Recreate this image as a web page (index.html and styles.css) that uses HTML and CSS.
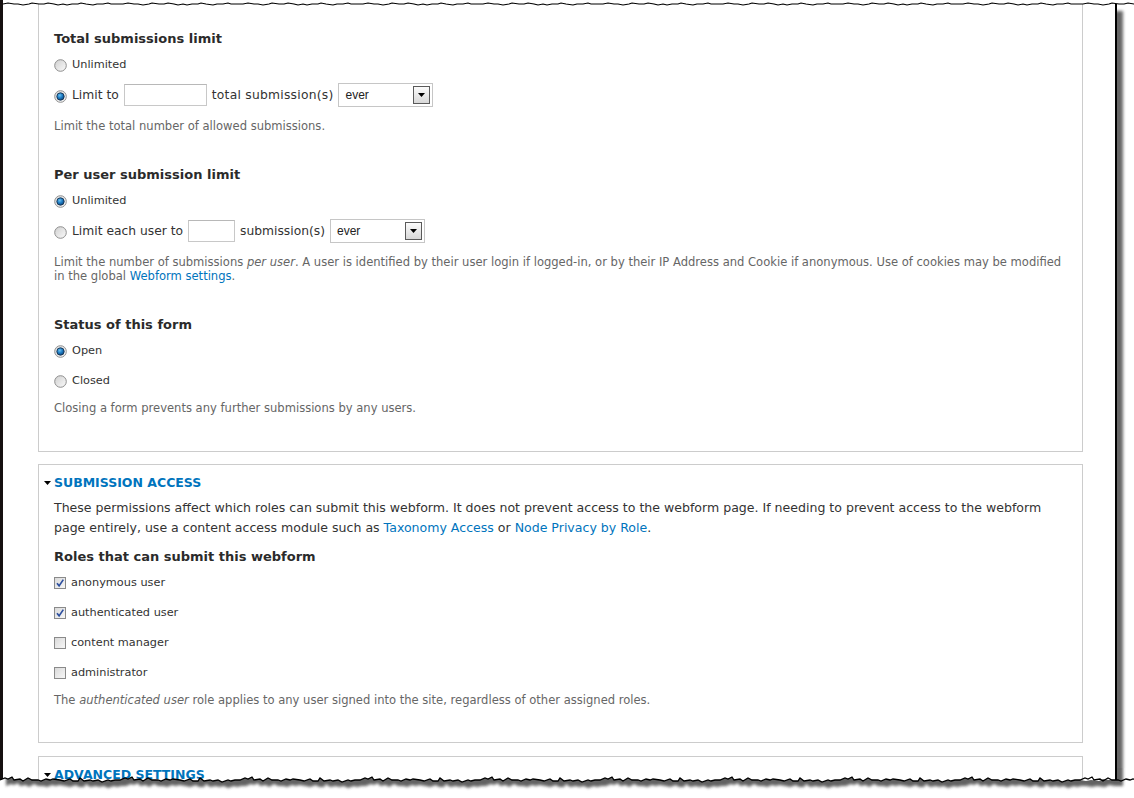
FILE: index.html
```html
<!DOCTYPE html>
<html lang="en">
<head>
<meta charset="utf-8">
<title>Webform settings</title>
<link rel="stylesheet" href="styles.css">
</head>
<body>
<svg class="defs" aria-hidden="true">
  <defs>
    <linearGradient id="gOff" x1="0" y1="0" x2="1" y2="1">
      <stop offset="0" stop-color="#cfcfcf"/>
      <stop offset="1" stop-color="#fbfbfb"/>
    </linearGradient>
    <linearGradient id="gRing" x1="0" y1="0" x2="1" y2="1">
      <stop offset="0" stop-color="#dcdcdc"/>
      <stop offset="1" stop-color="#fdfdfd"/>
    </linearGradient>
    <radialGradient id="gDot" cx="0.4" cy="0.35" r="0.7">
      <stop offset="0" stop-color="#6cc3f2"/>
      <stop offset="0.5" stop-color="#1d7cc4"/>
      <stop offset="1" stop-color="#0b3f73"/>
    </radialGradient>
    <linearGradient id="gBox" x1="0" y1="0" x2="1" y2="1">
      <stop offset="0" stop-color="#d8d8d8"/>
      <stop offset="1" stop-color="#f8f8f8"/>
    </linearGradient>
    <filter id="blur" x="-5%" y="-50%" width="110%" height="200%"><feGaussianBlur stdDeviation="1.6"/></filter>
  </defs>
</svg>

<div class="frame">
  <div class="paper">

    <div class="fs fs-cut">
      <div class="h">Total submissions limit</div>
      <div class="opts">
        <div class="row">
          <svg class="radio" viewBox="0 0 13 13"><circle cx="6.5" cy="6.5" r="5.8" fill="url(#gOff)" stroke="#8e8e8e"/></svg>
          <span class="lbl">Unlimited</span>
        </div>
        <div class="row inputrow">
          <svg class="radio" viewBox="0 0 13 13"><circle cx="6.5" cy="6.5" r="5.8" fill="url(#gRing)" stroke="#8e8e8e"/><circle cx="6.5" cy="6.5" r="3.7" fill="url(#gDot)" stroke="#17324f" stroke-width="0.9"/></svg>
          <span class="lbl big">Limit to</span>
          <span class="txt w83"></span>
          <span class="lbl big wide">total submission(s)</span>
          <span class="select"><span class="sel-text">ever</span><span class="sel-btn"><svg width="7" height="4" viewBox="0 0 7 4"><path d="M0 0H7L3.5 4Z" fill="#000"/></svg></span></span>
        </div>
      </div>
      <div class="desc">Limit the total number of allowed submissions.</div>

      <div class="h gap">Per user submission limit</div>
      <div class="opts">
        <div class="row">
          <svg class="radio" viewBox="0 0 13 13"><circle cx="6.5" cy="6.5" r="5.8" fill="url(#gRing)" stroke="#8e8e8e"/><circle cx="6.5" cy="6.5" r="3.7" fill="url(#gDot)" stroke="#17324f" stroke-width="0.9"/></svg>
          <span class="lbl">Unlimited</span>
        </div>
        <div class="row inputrow">
          <svg class="radio" viewBox="0 0 13 13"><circle cx="6.5" cy="6.5" r="5.8" fill="url(#gOff)" stroke="#8e8e8e"/></svg>
          <span class="lbl big">Limit each user to</span>
          <span class="txt w47"></span>
          <span class="lbl big">submission(s)</span>
          <span class="select"><span class="sel-text">ever</span><span class="sel-btn"><svg width="7" height="4" viewBox="0 0 7 4"><path d="M0 0H7L3.5 4Z" fill="#000"/></svg></span></span>
        </div>
      </div>
      <div class="desc">Limit the number of submissions <em>per user</em>. A user is identified by their user login if logged-in, or by their IP Address and Cookie if anonymous. Use of cookies may be modified<br>in the global <a href="#">Webform settings</a>.</div>

      <div class="h gap">Status of this form</div>
      <div class="opts">
        <div class="row">
          <svg class="radio" viewBox="0 0 13 13"><circle cx="6.5" cy="6.5" r="5.8" fill="url(#gRing)" stroke="#8e8e8e"/><circle cx="6.5" cy="6.5" r="3.7" fill="url(#gDot)" stroke="#17324f" stroke-width="0.9"/></svg>
          <span class="lbl">Open</span>
        </div>
        <div class="row">
          <svg class="radio" viewBox="0 0 13 13"><circle cx="6.5" cy="6.5" r="5.8" fill="url(#gOff)" stroke="#8e8e8e"/></svg>
          <span class="lbl">Closed</span>
        </div>
      </div>
      <div class="desc">Closing a form prevents any further submissions by any users.</div>
    </div>

    <div class="fs">
      <div class="legend"><svg class="tri" width="7" height="4" viewBox="0 0 7 4"><path d="M0 0H7L3.5 4Z" fill="#000"/></svg><a href="#">Submission access</a></div>
      <p class="para">These permissions affect which roles can submit this webform. It does not prevent access to the webform page. If needing to prevent access to the webform<br>page entirely, use a content access module such as <a href="#">Taxonomy Access</a> or <a href="#">Node Privacy by Role</a>.</p>
      <div class="h small-gap">Roles that can submit this webform</div>
      <div class="opts">
        <div class="row">
          <svg class="check" viewBox="0 0 12 12"><rect x="0.5" y="0.5" width="11" height="11" fill="url(#gBox)" stroke="#8a8a8a"/><path d="M3 6.3L5.1 8.9L9.3 2.6" fill="none" stroke="#2d4f9f" stroke-width="1.7"/></svg>
          <span class="lbl">anonymous user</span>
        </div>
        <div class="row">
          <svg class="check" viewBox="0 0 12 12"><rect x="0.5" y="0.5" width="11" height="11" fill="url(#gBox)" stroke="#8a8a8a"/><path d="M3 6.3L5.1 8.9L9.3 2.6" fill="none" stroke="#2d4f9f" stroke-width="1.7"/></svg>
          <span class="lbl">authenticated user</span>
        </div>
        <div class="row">
          <svg class="check" viewBox="0 0 12 12"><rect x="0.5" y="0.5" width="11" height="11" fill="url(#gBox)" stroke="#8a8a8a"/></svg>
          <span class="lbl">content manager</span>
        </div>
        <div class="row">
          <svg class="check" viewBox="0 0 12 12"><rect x="0.5" y="0.5" width="11" height="11" fill="url(#gBox)" stroke="#8a8a8a"/></svg>
          <span class="lbl">administrator</span>
        </div>
      </div>
      <div class="desc">The <em>authenticated user</em> role applies to any user signed into the site, regardless of other assigned roles.</div>
    </div>

    <div class="fs">
      <div class="legend"><svg class="tri" width="7" height="4" viewBox="0 0 7 4"><path d="M0 0H7L3.5 4Z" fill="#000"/></svg><a href="#">Advanced settings</a></div>
    </div>

  </div>

  <svg class="edge-top" width="1134" height="12" viewBox="0 0 1134 12" aria-hidden="true">
    <path fill="#fff" d="M3 0L3 4l5 -1 l6 1 l4 0 l5 1 l6 -1 l3 -1 l7 1 l5 0 l4 -1 l6 1 l4 1 l5 -1 l4 1 l5 -1 l6 0 l3 -1 l5 1 l7 1 l4 -1 l6 0 l5 -1 l3 1 l7 0 l5 0 l5 -1 l6 1 l4 0 l5 1 l6 -1 l3 -1 l7 1 l5 0 l4 -1 l6 1 l4 1 l5 -1 l4 1 l5 -1 l6 0 l3 -1 l5 1 l7 1 l4 -1 l6 0 l5 -1 l3 1 l7 0 l5 0 l5 -1 l6 1 l4 0 l5 1 l6 -1 l3 -1 l7 1 l5 0 l4 -1 l6 1 l4 1 l5 -1 l4 1 l5 -1 l6 0 l3 -1 l5 1 l7 1 l4 -1 l6 0 l5 -1 l3 1 l7 0 l5 0 l5 -1 l6 1 l4 0 l5 1 l6 -1 l3 -1 l7 1 l5 0 l4 -1 l6 1 l4 1 l5 -1 l4 1 l5 -1 l6 0 l3 -1 l5 1 l7 1 l4 -1 l6 0 l5 -1 l3 1 l7 0 l5 0 l5 -1 l6 1 l4 0 l5 1 l6 -1 l3 -1 l7 1 l5 0 l4 -1 l6 1 l4 1 l5 -1 l4 1 l5 -1 l6 0 l3 -1 l5 1 l7 1 l4 -1 l6 0 l5 -1 l3 1 l7 0 l5 0 l5 -1 l6 1 l4 0 l5 1 l6 -1 l3 -1 l7 1 l5 0 l4 -1 l6 1 l4 1 l5 -1 l4 1 l5 -1 l6 0 l3 -1 l5 1 l7 1 l4 -1 l6 0 l5 -1 l3 1 l7 0 l5 0 l5 -1 l6 1 l4 0 l5 1 l6 -1 l3 -1 l7 1 l5 0 l4 -1 l6 1 l4 1 l5 -1 l4 1 l5 -1 l6 0 l3 -1 l5 1 l7 1 l4 -1 l6 0 l5 -1 l3 1 l7 0 l5 0 l5 -1 l6 1 l4 0 l5 1 l6 -1 l3 -1 l7 1 l5 0 l4 -1 l6 1 l4 1 l5 -1 l4 1 l5 -1 l6 0 l3 -1 l5 1 l7 1 l4 -1 l6 0 l5 -1 l3 1 l7 0 l5 0 l5 -1 l6 1 l4 0 l5 1 l6 -1 l3 -1 l7 1 l5 0 l4 -1 l6 1 l4 1 l5 -1 l4 1 l5 -1 l6 0 l3 -1 l5 1 l7 1 l4 -1 l6 0 l5 -1 l3 1 l7 0 l5 0 l6 1 l5 -1 l7 0 l4 -1 l6 1 l6 0 L1117 0Z"/>
    <path fill="none" stroke="#000" stroke-width="1.2" d="M3 4l5 -1 l6 1 l4 0 l5 1 l6 -1 l3 -1 l7 1 l5 0 l4 -1 l6 1 l4 1 l5 -1 l4 1 l5 -1 l6 0 l3 -1 l5 1 l7 1 l4 -1 l6 0 l5 -1 l3 1 l7 0 l5 0 l5 -1 l6 1 l4 0 l5 1 l6 -1 l3 -1 l7 1 l5 0 l4 -1 l6 1 l4 1 l5 -1 l4 1 l5 -1 l6 0 l3 -1 l5 1 l7 1 l4 -1 l6 0 l5 -1 l3 1 l7 0 l5 0 l5 -1 l6 1 l4 0 l5 1 l6 -1 l3 -1 l7 1 l5 0 l4 -1 l6 1 l4 1 l5 -1 l4 1 l5 -1 l6 0 l3 -1 l5 1 l7 1 l4 -1 l6 0 l5 -1 l3 1 l7 0 l5 0 l5 -1 l6 1 l4 0 l5 1 l6 -1 l3 -1 l7 1 l5 0 l4 -1 l6 1 l4 1 l5 -1 l4 1 l5 -1 l6 0 l3 -1 l5 1 l7 1 l4 -1 l6 0 l5 -1 l3 1 l7 0 l5 0 l5 -1 l6 1 l4 0 l5 1 l6 -1 l3 -1 l7 1 l5 0 l4 -1 l6 1 l4 1 l5 -1 l4 1 l5 -1 l6 0 l3 -1 l5 1 l7 1 l4 -1 l6 0 l5 -1 l3 1 l7 0 l5 0 l5 -1 l6 1 l4 0 l5 1 l6 -1 l3 -1 l7 1 l5 0 l4 -1 l6 1 l4 1 l5 -1 l4 1 l5 -1 l6 0 l3 -1 l5 1 l7 1 l4 -1 l6 0 l5 -1 l3 1 l7 0 l5 0 l5 -1 l6 1 l4 0 l5 1 l6 -1 l3 -1 l7 1 l5 0 l4 -1 l6 1 l4 1 l5 -1 l4 1 l5 -1 l6 0 l3 -1 l5 1 l7 1 l4 -1 l6 0 l5 -1 l3 1 l7 0 l5 0 l5 -1 l6 1 l4 0 l5 1 l6 -1 l3 -1 l7 1 l5 0 l4 -1 l6 1 l4 1 l5 -1 l4 1 l5 -1 l6 0 l3 -1 l5 1 l7 1 l4 -1 l6 0 l5 -1 l3 1 l7 0 l5 0 l5 -1 l6 1 l4 0 l5 1 l6 -1 l3 -1 l7 1 l5 0 l4 -1 l6 1 l4 1 l5 -1 l4 1 l5 -1 l6 0 l3 -1 l5 1 l7 1 l4 -1 l6 0 l5 -1 l3 1 l7 0 l5 0 l5 -1 l6 1 l4 0 l5 1 l6 -1 l3 -1 l7 1 l5 0 l4 -1 l6 1 l4 1 l5 -1 l4 1 l5 -1 l6 0 l3 -1 l5 1 l7 1 l4 -1 l6 0 l5 -1 l3 1 l7 0 l5 0 l6 1 l5 -1 l7 0 l4 -1 l6 1 l6 0"/>
  </svg>

  <svg class="edge-bottom" width="1134" height="30" viewBox="0 0 1134 30" aria-hidden="true">
    <defs>
      <clipPath id="outside">
        <path d="M0 30L0 12l5 -2 l3 1 l4 -2 l2 3 l6 -1 l3 2 l5 -3 l4 2 l6 0 l3 1 l5 -2 l4 1 l3 -1 l7 1 l4 1 l6 -2 l3 2 l5 0 l2 -3 l4 3 l6 -1 l3 1 l5 -1 l4 2 l6 -2 l3 1 l4 -1 l5 0 l5 -2 l3 1 l4 -2 l2 3 l6 -1 l3 2 l5 -3 l4 2 l6 0 l3 1 l5 -2 l4 1 l3 -1 l7 1 l4 1 l6 -2 l3 2 l5 0 l2 -3 l4 3 l6 -1 l3 1 l5 -1 l4 2 l6 -2 l3 1 l4 -1 l5 0 l5 -2 l3 1 l4 -2 l2 3 l6 -1 l3 2 l5 -3 l4 2 l6 0 l3 1 l5 -2 l4 1 l3 -1 l7 1 l4 1 l6 -2 l3 2 l5 0 l2 -3 l4 3 l6 -1 l3 1 l5 -1 l4 2 l6 -2 l3 1 l4 -1 l5 0 l5 -2 l3 1 l4 -2 l2 3 l6 -1 l3 2 l5 -3 l4 2 l6 0 l3 1 l5 -2 l4 1 l3 -1 l7 1 l4 1 l6 -2 l3 2 l5 0 l2 -3 l4 3 l6 -1 l3 1 l5 -1 l4 2 l6 -2 l3 1 l4 -1 l5 0 l5 -2 l3 1 l4 -2 l2 3 l6 -1 l3 2 l5 -3 l4 2 l6 0 l3 1 l5 -2 l4 1 l3 -1 l7 1 l4 1 l6 -2 l3 2 l5 0 l2 -3 l4 3 l6 -1 l3 1 l5 -1 l4 2 l6 -2 l3 1 l4 -1 l5 0 l5 -2 l3 1 l4 -2 l2 3 l6 -1 l3 2 l5 -3 l4 2 l6 0 l3 1 l5 -2 l4 1 l3 -1 l7 1 l4 1 l6 -2 l3 2 l5 0 l2 -3 l4 3 l6 -1 l3 1 l5 -1 l4 2 l6 -2 l3 1 l4 -1 l5 0 l5 -2 l3 1 l4 -2 l2 3 l6 -1 l3 2 l5 -3 l4 2 l6 0 l3 1 l5 -2 l4 1 l3 -1 l7 1 l4 1 l6 -2 l3 2 l5 0 l2 -3 l4 3 l6 -1 l3 1 l5 -1 l4 2 l6 -2 l3 1 l4 -1 l5 0 l5 -2 l3 1 l4 -2 l2 3 l6 -1 l3 2 l5 -3 l4 2 l6 0 l3 1 l5 -2 l4 1 l3 -1 l7 1 l4 1 l6 -2 l3 2 l5 0 l2 -3 l4 3 l6 -1 l3 1 l5 -1 l4 2 l6 -2 l3 1 l4 -1 l5 0 l5 -2 l3 1 l4 -2 l2 3 l6 -1 l3 2 l5 -3 l4 2 l6 0 l3 1 l5 -2 l4 1 l3 -1 l7 1 l4 1 l6 -2 l3 2 l5 0 l2 -3 l4 3 l6 -1 l3 1 l5 -1 l4 2 l6 -2 l3 1 l4 -1 l5 0 l6 1 l5 -1 l8 1 l4 -2 l6 1 l8 0 L1117 0L1134 0L1134 30Z"/>
      </clipPath>
    </defs>
    <path fill="#fff" d="M0 30L0 12l5 -2 l3 1 l4 -2 l2 3 l6 -1 l3 2 l5 -3 l4 2 l6 0 l3 1 l5 -2 l4 1 l3 -1 l7 1 l4 1 l6 -2 l3 2 l5 0 l2 -3 l4 3 l6 -1 l3 1 l5 -1 l4 2 l6 -2 l3 1 l4 -1 l5 0 l5 -2 l3 1 l4 -2 l2 3 l6 -1 l3 2 l5 -3 l4 2 l6 0 l3 1 l5 -2 l4 1 l3 -1 l7 1 l4 1 l6 -2 l3 2 l5 0 l2 -3 l4 3 l6 -1 l3 1 l5 -1 l4 2 l6 -2 l3 1 l4 -1 l5 0 l5 -2 l3 1 l4 -2 l2 3 l6 -1 l3 2 l5 -3 l4 2 l6 0 l3 1 l5 -2 l4 1 l3 -1 l7 1 l4 1 l6 -2 l3 2 l5 0 l2 -3 l4 3 l6 -1 l3 1 l5 -1 l4 2 l6 -2 l3 1 l4 -1 l5 0 l5 -2 l3 1 l4 -2 l2 3 l6 -1 l3 2 l5 -3 l4 2 l6 0 l3 1 l5 -2 l4 1 l3 -1 l7 1 l4 1 l6 -2 l3 2 l5 0 l2 -3 l4 3 l6 -1 l3 1 l5 -1 l4 2 l6 -2 l3 1 l4 -1 l5 0 l5 -2 l3 1 l4 -2 l2 3 l6 -1 l3 2 l5 -3 l4 2 l6 0 l3 1 l5 -2 l4 1 l3 -1 l7 1 l4 1 l6 -2 l3 2 l5 0 l2 -3 l4 3 l6 -1 l3 1 l5 -1 l4 2 l6 -2 l3 1 l4 -1 l5 0 l5 -2 l3 1 l4 -2 l2 3 l6 -1 l3 2 l5 -3 l4 2 l6 0 l3 1 l5 -2 l4 1 l3 -1 l7 1 l4 1 l6 -2 l3 2 l5 0 l2 -3 l4 3 l6 -1 l3 1 l5 -1 l4 2 l6 -2 l3 1 l4 -1 l5 0 l5 -2 l3 1 l4 -2 l2 3 l6 -1 l3 2 l5 -3 l4 2 l6 0 l3 1 l5 -2 l4 1 l3 -1 l7 1 l4 1 l6 -2 l3 2 l5 0 l2 -3 l4 3 l6 -1 l3 1 l5 -1 l4 2 l6 -2 l3 1 l4 -1 l5 0 l5 -2 l3 1 l4 -2 l2 3 l6 -1 l3 2 l5 -3 l4 2 l6 0 l3 1 l5 -2 l4 1 l3 -1 l7 1 l4 1 l6 -2 l3 2 l5 0 l2 -3 l4 3 l6 -1 l3 1 l5 -1 l4 2 l6 -2 l3 1 l4 -1 l5 0 l5 -2 l3 1 l4 -2 l2 3 l6 -1 l3 2 l5 -3 l4 2 l6 0 l3 1 l5 -2 l4 1 l3 -1 l7 1 l4 1 l6 -2 l3 2 l5 0 l2 -3 l4 3 l6 -1 l3 1 l5 -1 l4 2 l6 -2 l3 1 l4 -1 l5 0 l6 1 l5 -1 l8 1 l4 -2 l6 1 l8 0 L1117 0L1134 0L1134 30Z"/>
    <g clip-path="url(#outside)">
      <path transform="translate(6 6)" fill="#3a3a3a" opacity="0.8" filter="url(#blur)" d="M0 -30L0 12l5 -2 l3 1 l4 -2 l2 3 l6 -1 l3 2 l5 -3 l4 2 l6 0 l3 1 l5 -2 l4 1 l3 -1 l7 1 l4 1 l6 -2 l3 2 l5 0 l2 -3 l4 3 l6 -1 l3 1 l5 -1 l4 2 l6 -2 l3 1 l4 -1 l5 0 l5 -2 l3 1 l4 -2 l2 3 l6 -1 l3 2 l5 -3 l4 2 l6 0 l3 1 l5 -2 l4 1 l3 -1 l7 1 l4 1 l6 -2 l3 2 l5 0 l2 -3 l4 3 l6 -1 l3 1 l5 -1 l4 2 l6 -2 l3 1 l4 -1 l5 0 l5 -2 l3 1 l4 -2 l2 3 l6 -1 l3 2 l5 -3 l4 2 l6 0 l3 1 l5 -2 l4 1 l3 -1 l7 1 l4 1 l6 -2 l3 2 l5 0 l2 -3 l4 3 l6 -1 l3 1 l5 -1 l4 2 l6 -2 l3 1 l4 -1 l5 0 l5 -2 l3 1 l4 -2 l2 3 l6 -1 l3 2 l5 -3 l4 2 l6 0 l3 1 l5 -2 l4 1 l3 -1 l7 1 l4 1 l6 -2 l3 2 l5 0 l2 -3 l4 3 l6 -1 l3 1 l5 -1 l4 2 l6 -2 l3 1 l4 -1 l5 0 l5 -2 l3 1 l4 -2 l2 3 l6 -1 l3 2 l5 -3 l4 2 l6 0 l3 1 l5 -2 l4 1 l3 -1 l7 1 l4 1 l6 -2 l3 2 l5 0 l2 -3 l4 3 l6 -1 l3 1 l5 -1 l4 2 l6 -2 l3 1 l4 -1 l5 0 l5 -2 l3 1 l4 -2 l2 3 l6 -1 l3 2 l5 -3 l4 2 l6 0 l3 1 l5 -2 l4 1 l3 -1 l7 1 l4 1 l6 -2 l3 2 l5 0 l2 -3 l4 3 l6 -1 l3 1 l5 -1 l4 2 l6 -2 l3 1 l4 -1 l5 0 l5 -2 l3 1 l4 -2 l2 3 l6 -1 l3 2 l5 -3 l4 2 l6 0 l3 1 l5 -2 l4 1 l3 -1 l7 1 l4 1 l6 -2 l3 2 l5 0 l2 -3 l4 3 l6 -1 l3 1 l5 -1 l4 2 l6 -2 l3 1 l4 -1 l5 0 l5 -2 l3 1 l4 -2 l2 3 l6 -1 l3 2 l5 -3 l4 2 l6 0 l3 1 l5 -2 l4 1 l3 -1 l7 1 l4 1 l6 -2 l3 2 l5 0 l2 -3 l4 3 l6 -1 l3 1 l5 -1 l4 2 l6 -2 l3 1 l4 -1 l5 0 l5 -2 l3 1 l4 -2 l2 3 l6 -1 l3 2 l5 -3 l4 2 l6 0 l3 1 l5 -2 l4 1 l3 -1 l7 1 l4 1 l6 -2 l3 2 l5 0 l2 -3 l4 3 l6 -1 l3 1 l5 -1 l4 2 l6 -2 l3 1 l4 -1 l5 0 l6 1 l5 -1 l8 1 l4 -2 l6 1 l8 0 L1117 -30Z"/>
    </g>
    <path fill="none" stroke="#000" stroke-width="1.3" d="M0 12l5 -2 l3 1 l4 -2 l2 3 l6 -1 l3 2 l5 -3 l4 2 l6 0 l3 1 l5 -2 l4 1 l3 -1 l7 1 l4 1 l6 -2 l3 2 l5 0 l2 -3 l4 3 l6 -1 l3 1 l5 -1 l4 2 l6 -2 l3 1 l4 -1 l5 0 l5 -2 l3 1 l4 -2 l2 3 l6 -1 l3 2 l5 -3 l4 2 l6 0 l3 1 l5 -2 l4 1 l3 -1 l7 1 l4 1 l6 -2 l3 2 l5 0 l2 -3 l4 3 l6 -1 l3 1 l5 -1 l4 2 l6 -2 l3 1 l4 -1 l5 0 l5 -2 l3 1 l4 -2 l2 3 l6 -1 l3 2 l5 -3 l4 2 l6 0 l3 1 l5 -2 l4 1 l3 -1 l7 1 l4 1 l6 -2 l3 2 l5 0 l2 -3 l4 3 l6 -1 l3 1 l5 -1 l4 2 l6 -2 l3 1 l4 -1 l5 0 l5 -2 l3 1 l4 -2 l2 3 l6 -1 l3 2 l5 -3 l4 2 l6 0 l3 1 l5 -2 l4 1 l3 -1 l7 1 l4 1 l6 -2 l3 2 l5 0 l2 -3 l4 3 l6 -1 l3 1 l5 -1 l4 2 l6 -2 l3 1 l4 -1 l5 0 l5 -2 l3 1 l4 -2 l2 3 l6 -1 l3 2 l5 -3 l4 2 l6 0 l3 1 l5 -2 l4 1 l3 -1 l7 1 l4 1 l6 -2 l3 2 l5 0 l2 -3 l4 3 l6 -1 l3 1 l5 -1 l4 2 l6 -2 l3 1 l4 -1 l5 0 l5 -2 l3 1 l4 -2 l2 3 l6 -1 l3 2 l5 -3 l4 2 l6 0 l3 1 l5 -2 l4 1 l3 -1 l7 1 l4 1 l6 -2 l3 2 l5 0 l2 -3 l4 3 l6 -1 l3 1 l5 -1 l4 2 l6 -2 l3 1 l4 -1 l5 0 l5 -2 l3 1 l4 -2 l2 3 l6 -1 l3 2 l5 -3 l4 2 l6 0 l3 1 l5 -2 l4 1 l3 -1 l7 1 l4 1 l6 -2 l3 2 l5 0 l2 -3 l4 3 l6 -1 l3 1 l5 -1 l4 2 l6 -2 l3 1 l4 -1 l5 0 l5 -2 l3 1 l4 -2 l2 3 l6 -1 l3 2 l5 -3 l4 2 l6 0 l3 1 l5 -2 l4 1 l3 -1 l7 1 l4 1 l6 -2 l3 2 l5 0 l2 -3 l4 3 l6 -1 l3 1 l5 -1 l4 2 l6 -2 l3 1 l4 -1 l5 0 l5 -2 l3 1 l4 -2 l2 3 l6 -1 l3 2 l5 -3 l4 2 l6 0 l3 1 l5 -2 l4 1 l3 -1 l7 1 l4 1 l6 -2 l3 2 l5 0 l2 -3 l4 3 l6 -1 l3 1 l5 -1 l4 2 l6 -2 l3 1 l4 -1 l5 0 l5 -2 l3 1 l4 -2 l2 3 l6 -1 l3 2 l5 -3 l4 2 l6 0 l3 1 l5 -2 l4 1 l3 -1 l7 1 l4 1 l6 -2 l3 2 l5 0 l2 -3 l4 3 l6 -1 l3 1 l5 -1 l4 2 l6 -2 l3 1 l4 -1 l5 0 l6 1 l5 -1 l8 1 l4 -2 l6 1 l8 0"/>
  </svg>
</div>
</body>
</html>
```

FILE: styles.css
```css
* {
  box-sizing: border-box;
}

body {
  margin: 0;
  background: #fff;
  font-family: "DejaVu Sans", Verdana, sans-serif;
  color: #333;
}

a {
  color: #0074bd;
  text-decoration: none;
}

.defs {
  position: absolute;
  width: 0;
  height: 0;
  overflow: hidden;
}

.frame {
  position: relative;
  width: 1134px;
  height: 798px;
  overflow: hidden;
}

.paper {
  width: 1117px;
  height: 790px;
  border-left: 3px solid #151010;
  border-right: 2px solid #000;
  box-shadow: 6px 11px 3px rgba(0, 0, 0, 0.6);
  padding: 0 32px 0 35px;
  overflow: hidden;
  background: #fff;
}

.edge-top {
  position: absolute;
  left: 0;
  top: 0;
}

.edge-bottom {
  position: absolute;
  left: 0;
  top: 768px;
}

/* fieldsets */
.fs {
  border: 1px solid #ccc;
  padding: 7px 15px 35px;
  margin-bottom: 13px;
}

.fs-cut {
  border-top: 0;
  padding-top: 29px;
  padding-bottom: 36px;
  margin-bottom: 12px;
}

.legend {
  display: flex;
  align-items: center;
  height: 20px;
  margin-left: -10px;
  font-size: 12.5px;
  font-weight: bold;
  text-transform: uppercase;
}

.tri {
  margin-right: 3px;
  margin-top: 1px;
}

.h {
  font-size: 13px;
  font-weight: bold;
  line-height: 20px;
  color: #2b2b2b;
}

.h.gap {
  margin-top: 32px;
}

.h.small-gap {
  margin-top: 9px;
}

.opts {
  display: flex;
  flex-direction: column;
}

.row {
  display: flex;
  align-items: center;
  height: 30px;
}

.row.inputrow {
  margin-top: 1px;
  margin-bottom: 3px;
}

.radio {
  width: 13px;
  height: 13px;
  margin-top: 2px;
  flex: none;
}

.check {
  width: 12px;
  height: 12px;
  margin-top: 2px;
  flex: none;
}

.lbl {
  font-size: 11.3px;
  margin-left: 5px;
  white-space: nowrap;
}

.lbl.big {
  font-size: 12.3px;
}

.lbl.wide {
  letter-spacing: 0.25px;
}

.txt {
  display: block;
  height: 22px;
  border: 1px solid #c8c8c8;
  border-top-color: #b8b8b8;
  background: #fff;
  margin-left: 5px;
}

.w83 { width: 83px; }
.w47 { width: 47px; }

.select {
  display: flex;
  align-items: center;
  justify-content: space-between;
  width: 95px;
  height: 24px;
  margin-left: 5px;
  padding: 0 2px 0 6px;
  border: 1px solid #c6c6c6;
  background: #fff;
}

.sel-text {
  font-family: "Liberation Sans", Arial, sans-serif;
  font-size: 12px;
  color: #222;
}

.sel-btn {
  display: flex;
  align-items: center;
  justify-content: center;
  width: 17px;
  height: 18px;
  border: 1px solid #5a5a5a;
  background: linear-gradient(#fbfbfb, #d8d8d8);
}

.desc {
  margin-top: 6px;
  font-size: 11.55px;
  line-height: 14px;
  color: #666;
  white-space: nowrap;
}

.para {
  margin: 6px 0 0;
  font-size: 12.55px;
  line-height: 20px;
  color: #333;
  white-space: nowrap;
}
```
